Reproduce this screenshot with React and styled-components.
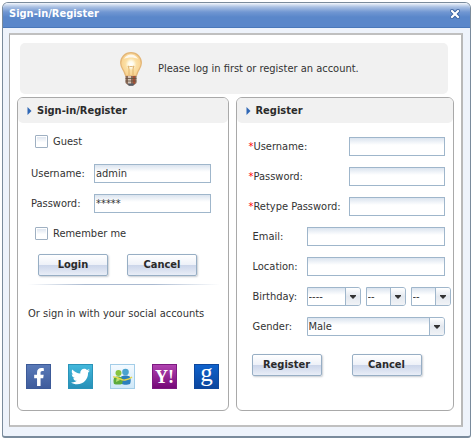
import React, { useState } from 'react'
import styled, { createGlobalStyle } from 'styled-components'
import { FaFacebookF, FaTwitter } from 'react-icons/fa'

const GlobalStyle = createGlobalStyle`
  * {
    box-sizing: border-box;
  }

  body {
    margin: 0;
    background: #fff;
    color: #333;
    font-family: 'DejaVu Sans Condensed', 'DejaVu Sans', sans-serif;
    font-size: 11px;
    line-height: 14px;
  }

  input,
  select,
  button {
    margin: 0;
    font: inherit;
    color: inherit;
  }
`

const Window = styled.section`
  margin: 2px;
  border: 1px solid #7a8b9c;
  border-bottom: 2px solid #7a8b9c;
  border-radius: 6px 6px 3px 3px;
  background: #eef3fb;
  overflow: hidden;
`

const TitleBar = styled.header`
  display: flex;
  align-items: center;
  justify-content: space-between;
  height: 25px;
  padding: 0 10px 2px 6px;
  border-bottom: 1px solid #4a78ba;
  background: linear-gradient(#f4f7fc 0, #a9c0e3 4px, #7197d2 9px, #5a87ca 14px, #5a87ca 100%);
`

const Title = styled.h1`
  margin: 0;
  color: #fff;
  font-size: 11px;
  font-weight: bold;
`

const CloseButton = styled.button`
  display: flex;
  padding: 0;
  border: 0;
  background: none;
`

const Content = styled.main`
  margin: 5px 7px 9px 6px;
  padding: 8px 7px 14px;
  border: 1px solid #a9a9a9;
  border-top: 2px solid #c0c0c0;
  border-right: 2px solid #b9b9b9;
  border-bottom: 2px solid #c0c0c0;
  background: #fff;
`

const Notice = styled.div`
  display: flex;
  align-items: center;
  gap: 16px;
  height: 51px;
  margin: 0 6px 3px 3px;
  padding-left: 100px;
  border-radius: 5px;
  background: #f1f1f1;
`

const Columns = styled.div`
  display: grid;
  grid-template-columns: minmax(0, 212fr) minmax(0, 219fr);
  gap: 7px;
`

const Card = styled.form`
  border: 1px solid #a9a9a9;
  border-radius: 6px;
  background: #fff;
`

const CardHeader = styled.div`
  display: flex;
  align-items: center;
  gap: 5px;
  height: 25px;
  padding-left: 9px;
  border-radius: 5px;
  background: #f1f1f1;
`

const CardTitle = styled.h2`
  margin: 0;
  color: #2b2b2b;
  font-size: 11px;
  font-weight: bold;
`

const LoginBody = styled.div`
  padding: 9px 8px 21px 10px;
`

const RegisterBody = styled.div`
  padding: 14px 3px 34px 12px;
`

const Rows = styled.div`
  display: grid;
  grid-template-columns: minmax(0, 1fr);
  gap: 11px;
`

const Row = styled.div`
  display: flex;
  align-items: center;
  height: 19px;
  margin-bottom: ${({ $after }) => $after || 0}px;
  padding-left: ${({ $inset }) => $inset || 0}px;
  padding-right: ${({ $end }) => $end || 0}px;
`

const Label = styled.label`
  flex: none;
  width: ${({ $width }) => $width}px;
  white-space: nowrap;
`

const Required = styled.span`
  color: #f00;
`

const CheckLabel = styled.label`
  display: flex;
  align-items: center;
  gap: 5px;
`

const CheckBox = styled.input`
  appearance: none;
  width: 13px;
  height: 13px;
  border: 1px solid #9fb0c2;
  border-radius: 1px;
  background: linear-gradient(#dfe6f0, #fff 60%) content-box #fff;
  padding: 1px;

  &:checked {
    background: #5a87ca content-box;
  }
`

const TextInput = styled.input`
  flex: 1;
  min-width: 0;
  height: 19px;
  padding: 0 1px;
  border: 1px solid #9fb6cb;
  outline: none;
  background: linear-gradient(#dbe4ef, #fff 7px);
`

const SelectBox = styled.span`
  position: relative;
  display: block;
  flex: ${({ $width }) => ($width ? `none` : 1)};
  width: ${({ $width }) => ($width ? `${$width}px` : 'auto')};
  height: 19px;

  select {
    appearance: none;
    display: block;
    width: 100%;
    height: 19px;
    padding: 0 16px 0 1px;
    border: 1px solid #9fb6cb;
    border-radius: 0 3px 3px 0;
    outline: none;
    background: linear-gradient(#dbe4ef, #fff 7px);
  }
`

const SelectArrow = styled.span`
  position: absolute;
  top: 1px;
  right: 1px;
  bottom: 1px;
  display: flex;
  align-items: center;
  justify-content: center;
  width: 15px;
  border-left: 1px solid #9fb6cb;
  border-radius: 0 2px 2px 0;
  background: linear-gradient(#fff, #e3e8ef 50%, #f1f3f6);
  pointer-events: none;
`

const DateFields = styled.div`
  display: flex;
  gap: 5px;
`

const Buttons = styled.div`
  display: flex;
  gap: ${({ $gap }) => $gap}px;
  padding-top: ${({ $top }) => $top || 0}px;
  padding-left: ${({ $inset }) => $inset}px;
`

const Button = styled.button`
  width: 70px;
  height: 22px;
  padding: 0;
  border: 1px solid #97aec4;
  border-radius: 2px;
  background: linear-gradient(#fff 0, #eef1f8 48%, #ccd6ea 52%, #e9eef7 100%);
  box-shadow: 1px 1px 2px #c8ccd2;
  color: #2b2b2b;
  font-weight: bold;
`

const Divider = styled.hr`
  height: 1px;
  margin: 8px 0 22px;
  border: 0;
  background: linear-gradient(90deg, #fff, #a9b9d0 30%, #a9b9d0 65%, #fff);
`

const SocialText = styled.p`
  margin: 0 0 43px;
`

const SocialLinks = styled.div`
  display: flex;
  gap: 17px;
  margin-left: -2px;
`

const SocialLink = styled.a`
  display: flex;
  align-items: center;
  justify-content: center;
  width: 25px;
  height: 25px;
  border: 1px solid ${({ $edge }) => $edge};
  background: ${({ $fill }) => $fill};
  color: #fff;
  text-decoration: none;

  svg {
    overflow: visible;
  }
`

const BulbIcon = () => (
  <svg width="22" height="34" viewBox="0 0 22 34" aria-hidden="true">
    <defs>
      <radialGradient id="glow" cx="50%" cy="50%" r="52%">
        <stop offset="0" stopColor="#fff" />
        <stop offset="0.25" stopColor="#fffbe8" />
        <stop offset="0.5" stopColor="#fbe0a6" />
        <stop offset="1" stopColor="#f8d08c" />
      </radialGradient>
    </defs>
    <path
      d="M11 .7C5 .7.7 5.200.7 11c0 4 2 6 3.300 8.500C5 21.500 5 23 6 24h10c1-1 1-2.500 2-4.500C19.300 17 21.300 15 21.300 11 21.300 5.200 17 .7 11 .7z"
      fill="url(#glow)"
      stroke="#e3b678"
      strokeWidth="1.300"
    />
    <path d="M4 7c1.500-3 4-4.500 7-4.500s5.500 1.500 7 4.500c-4-2-10-2-14 0z" fill="#fff" opacity="0.8" />
    <path d="M9 23v-6l-1-3 2 1 1-1 1 1 2-1-1 3v6" fill="none" stroke="#d9a860" strokeWidth="0.8" />
    <path d="M5.500 24h11v7l-3 2.500h-5l-3-2.500z" fill="#8b6b59" />
    <path d="M8 24h3v8H8z" fill="#d4c3b5" />
    <path d="M13 24h2v8h-2z" fill="#a94f32" />
    <path d="M5.500 26.500h11M5.500 29h11" stroke="#65503f" strokeWidth="0.8" />
    <path d="M7.500 31.500h7L13 33.700H9z" fill="#555d67" />
  </svg>
)

const CloseIcon = () => (
  <svg width="10" height="10" viewBox="0 0 10 10" aria-hidden="true">
    <path d="M2 2l6 6M8 2L2 8" stroke="#365f9e" strokeWidth="4" strokeLinecap="square" />
    <path d="M2 2l6 6M8 2L2 8" stroke="#fff" strokeWidth="2.200" strokeLinecap="square" />
  </svg>
)

const Marker = () => (
  <svg width="5" height="8" viewBox="0 0 5 8" aria-hidden="true">
    <path d="M.5 0L4.500 4 .5 8z" fill="#2f67b5" />
  </svg>
)

const MessengerIcon = () => (
  <svg width="19" height="17" viewBox="0 0 19 17" aria-hidden="true">
    <circle cx="12.500" cy="4" r="3.300" fill="#4aa3cf" />
    <path d="M8 9c1-2 8-2 9 0 1 2 1 5 0 7-2 1-7 1-8 0z" fill="#2b7fbd" />
    <circle cx="5.500" cy="5" r="3" fill="#86c440" />
    <path d="M1 10c1-2 7-2 8 0 1 2 1 4 0 6-2 .8-6 .8-8 0-.7-2-.7-4 0-6z" fill="#5cab3c" />
    <path d="M4 8l3 4-4 2z" fill="#b8df72" />
    <path d="M0 9c5-1 8 4 12 3 3-.5 5-1 7-3" fill="none" stroke="#e8d84c" strokeWidth="1.300" />
  </svg>
)

const LetterLogo = ({ text, size, weight, y }) => (
  <svg width="23" height="23" viewBox="0 0 23 23" aria-hidden="true">
    <text
      x="11.500"
      y={y}
      textAnchor="middle"
      fill="#fff"
      fontFamily="Liberation Serif, serif"
      fontSize={size}
      fontWeight={weight}
    >
      {text}
    </text>
  </svg>
)

const Select = ({ id, label, width, options }) => (
  <SelectBox $width={width}>
    <select id={id} aria-label={label}>
      {options.map((option) => (
        <option key={option}>{option}</option>
      ))}
    </select>
    <SelectArrow>
      <svg width="6" height="4" viewBox="0 0 6 4" aria-hidden="true">
        <path d="M0 0h6v1L3 4 0 1z" fill="#333" />
      </svg>
    </SelectArrow>
  </SelectBox>
)

const registerFields = [
  { id: 'new-username', label: 'Username:', required: true },
  { id: 'new-password', label: 'Password:', required: true, type: 'password' },
  { id: 'retype-password', label: 'Retype Password:', required: true, type: 'password' },
  { id: 'email', label: 'Email:', type: 'email' },
  { id: 'location', label: 'Location:' },
]

const LoginForm = () => {
  const [username, setUsername] = useState('admin')
  const [password, setPassword] = useState('*****')

  return (
    <Card onSubmit={(e) => e.preventDefault()}>
      <CardHeader>
        <Marker />
        <CardTitle>Sign-in/Register</CardTitle>
      </CardHeader>
      <LoginBody>
        <Rows>
          <Row $inset={7} $after={2}>
            <CheckLabel>
              <CheckBox type="checkbox" />
              Guest
            </CheckLabel>
          </Row>
          <Row $inset={3} $end={9}>
            <Label htmlFor="username" $width={63}>
              Username:
            </Label>
            <TextInput
              id="username"
              value={username}
              onChange={(e) => setUsername(e.target.value)}
            />
          </Row>
          <Row $inset={3} $end={9}>
            <Label htmlFor="password" $width={63}>
              Password:
            </Label>
            <TextInput
              id="password"
              autoComplete="off"
              value={password}
              onChange={(e) => setPassword(e.target.value)}
            />
          </Row>
          <Row $inset={7}>
            <CheckLabel>
              <CheckBox type="checkbox" />
              Remember me
            </CheckLabel>
          </Row>
          <Buttons $inset={10} $gap={19}>
            <Button type="submit">Login</Button>
            <Button type="reset">Cancel</Button>
          </Buttons>
        </Rows>
        <Divider />
        <SocialText>Or sign in with your social accounts</SocialText>
        <SocialLinks>
          <SocialLink href="#facebook" aria-label="Facebook" $edge="#3c5a98" $fill="linear-gradient(#5a7ab8, #3f5c9c)">
            <FaFacebookF size={18} />
          </SocialLink>
          <SocialLink href="#twitter" aria-label="Twitter" $edge="#2a93b8" $fill="linear-gradient(#43b8dc, #2690b8)">
            <FaTwitter size={19} />
          </SocialLink>
          <SocialLink href="#messenger" aria-label="Messenger" $edge="#a3cde8" $fill="linear-gradient(#f4faff, #cfe8f8)">
            <MessengerIcon />
          </SocialLink>
          <SocialLink href="#yahoo" aria-label="Yahoo" $edge="#7c1a80" $fill="linear-gradient(#b043b0, #760878)">
            <LetterLogo text="Y!" size={18} weight="bold" y={18} />
          </SocialLink>
          <SocialLink href="#google" aria-label="Google" $edge="#0d479c" $fill="linear-gradient(#0f62cc, #0b469e)">
            <LetterLogo text="g" size={25} weight="normal" y={16} />
          </SocialLink>
        </SocialLinks>
      </LoginBody>
    </Card>
  )
}

const RegisterForm = () => (
  <Card onSubmit={(e) => e.preventDefault()}>
    <CardHeader>
      <Marker />
      <CardTitle>Register</CardTitle>
    </CardHeader>
    <RegisterBody>
      <Rows>
        {registerFields.map(({ id, label, required, type }) => (
          <Row key={id} $inset={required ? 0 : 4} $end={5}>
            <Label htmlFor={id} $width={required ? 100 : 54}>
              {required && <Required>*</Required>}
              {label}
            </Label>
            <TextInput id={id} type={type || 'text'} />
          </Row>
        ))}
        <Row $inset={4}>
          <Label htmlFor="year" $width={54}>
            Birthday:
          </Label>
          <DateFields>
            <Select id="year" label="Birthday year" width={54} options={['----']} />
            <Select id="month" label="Birthday month" width={40} options={['--']} />
            <Select id="day" label="Birthday day" width={40} options={['--']} />
          </DateFields>
        </Row>
        <Row $inset={4} $end={5}>
          <Label htmlFor="gender" $width={54}>
            Gender:
          </Label>
          <Select id="gender" label="Gender" options={['Male', 'Female']} />
        </Row>
        <Buttons $inset={3} $gap={30} $top={7}>
          <Button type="submit">Register</Button>
          <Button type="reset">Cancel</Button>
        </Buttons>
      </Rows>
    </RegisterBody>
  </Card>
)

const App = () => (
  <>
    <GlobalStyle />
    <Window>
      <TitleBar>
        <Title>Sign-in/Register</Title>
        <CloseButton type="button" aria-label="Close">
          <CloseIcon />
        </CloseButton>
      </TitleBar>
      <Content>
        <Notice>
          <BulbIcon />
          Please log in first or register an account.
        </Notice>
        <Columns>
          <LoginForm />
          <RegisterForm />
        </Columns>
      </Content>
    </Window>
  </>
)

export default App
